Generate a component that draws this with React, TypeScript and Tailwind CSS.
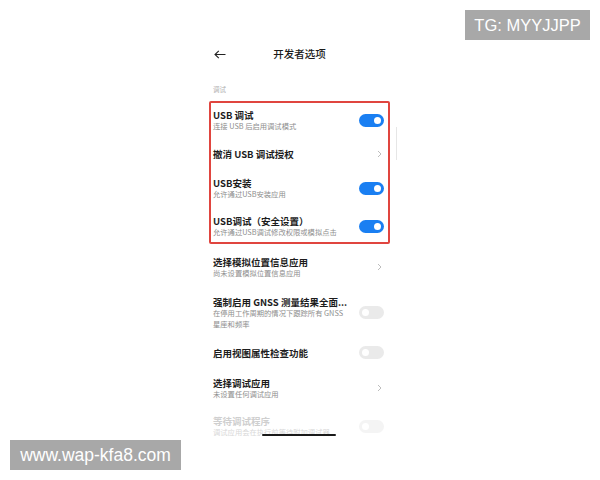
import React from "react";

const FONT = { fontFamily: '"Noto Sans CJK SC", "Noto Sans", sans-serif' };

function Toggle({ on, faded }: { on?: boolean; faded?: boolean }) {
  return (
    <div
      className={`w-[25px] h-[13px] rounded-full flex items-center px-[3px] shrink-0 ${
        on ? "bg-[#1a7ff2] justify-end" : faded ? "bg-[#f4f4f4] justify-start" : "bg-[#eaeaea] justify-start"
      }`}
    >
      <div className="w-[7px] h-[7px] rounded-full bg-white" />
    </div>
  );
}

function Chevron() {
  return (
    <svg width="5" height="8" viewBox="0 0 5 8" className="shrink-0 mr-[2px]">
      <path d="M1 1 L4 4 L1 7" fill="none" stroke="#b5b5b5" strokeWidth="0.9" />
    </svg>
  );
}

function Row({
  title,
  sub,
  right,
  h,
  faded,
  pl = "pl-[4px]",
  pr = "pr-[6px]",
  extra = "",
}: {
  title: string;
  sub?: string[];
  right: React.ReactNode;
  h: string;
  faded?: boolean;
  pl?: string;
  pr?: string;
  extra?: string;
}) {
  return (
    <div className={`flex items-center justify-between ${h} ${pl} ${pr} ${extra}`}>
      <div className="flex flex-col min-w-0">
        <div
          className={`text-[9.5px] leading-[12px] font-bold whitespace-nowrap ${
            faded ? "text-[#cfcfcf]" : "text-[#1c1c1c]"
          }`}
        >
          {title}
        </div>
        {sub &&
          sub.map((s, i) => (
            <div
              key={i}
              className={`text-[7.3px] leading-[11px] whitespace-nowrap ${
                faded ? "text-[#d8d8d8]" : "text-[#8e8e8e]"
              }`}
            >
              {s}
            </div>
          ))}
      </div>
      {right}
    </div>
  );
}

export default function App() {
  return (
    <div className="w-[600px] h-[480px] bg-white relative overflow-hidden" style={FONT}>
      <div className="ml-[209px] w-[181px] flex flex-col">
        <div className="mt-[44px] h-[20px] grid grid-cols-[1fr_auto_1fr] items-center">
          <div className="pl-[5px]">
            <svg width="12" height="9" viewBox="0 0 12 9">
              <path d="M11.5 4.5 H1 M4.8 0.8 L1 4.5 L4.8 8.2" fill="none" stroke="#222" strokeWidth="1.1" />
            </svg>
          </div>
          <div className="text-[10.5px] text-[#1a1a1a] font-medium">开发者选项</div>
          <div />
        </div>
        <div className="mt-[20px] h-[10px] pl-[4px] text-[6.5px] leading-[10px] text-[#b0b0b0]">调试</div>
        <div className="mt-[7px] bg-[#e0453f] p-[2px] rounded-[2px]">
          <div className="bg-white flex flex-col">
            <Row pl="pl-[2px]" pr="pr-[4px]" h="h-[34px]" title="USB 调试" sub={["连接 USB 后启用调试模式"]} right={<Toggle on />} />
            <Row pl="pl-[2px]" pr="pr-[4px]" h="h-[34px]" title="撤消 USB 调试授权" right={<Chevron />} />
            <Row pl="pl-[2px]" pr="pr-[4px]" h="h-[35px]" title="USB安装" sub={["允许通过USB安装应用"]} right={<Toggle on />} />
            <Row pl="pl-[2px]" pr="pr-[4px]" h="h-[36px]" extra="pt-[5px]" title="USB调试（安全设置）" sub={["允许通过USB调试修改权限或模拟点击"]} right={<Toggle on />} />
          </div>
        </div>
        <Row h="h-[46px]" title="选择模拟位置信息应用" sub={["尚未设置模拟位置信息应用"]} right={<Chevron />} />
        <Row h="h-[45px]" title="强制启用 GNSS 测量结果全面..." sub={["在停用工作周期的情况下跟踪所有 GNSS", "星座和频率"]} right={<Toggle />} />
        <Row h="h-[35px]" title="启用视图属性检查功能" right={<Toggle />} />
        <Row h="h-[36px]" title="选择调试应用" sub={["未设置任何调试应用"]} right={<Chevron />} />
        <Row h="h-[40px]" faded title="等待调试程序" sub={["调试应用会在执行前等待附加调试器"]} right={<Toggle faded />} />
      </div>

      <div className="absolute left-[396px] top-[127px] w-[1px] h-[33px] bg-[#e6e6e6]" />
      <div className="absolute left-[262px] top-[434px] w-[74px] h-[2px] rounded-full bg-[#1a1a1a]" />

      <div
        className="absolute left-[465px] top-[10px] w-[125px] h-[30px] bg-[#a8a8a8] flex items-center justify-center text-white text-[16.5px]"
        style={{ fontFamily: '"Liberation Sans", Arial, sans-serif' }}
      >
        TG: MYYJJPP
      </div>
      <div
        className="absolute left-[10px] top-[440px] w-[171px] h-[30px] bg-[#a8a8a8] flex items-center justify-center text-white text-[17.5px]"
        style={{ fontFamily: '"Liberation Sans", Arial, sans-serif' }}
      >
        www.wap-kfa8.com
      </div>
    </div>
  );
}
